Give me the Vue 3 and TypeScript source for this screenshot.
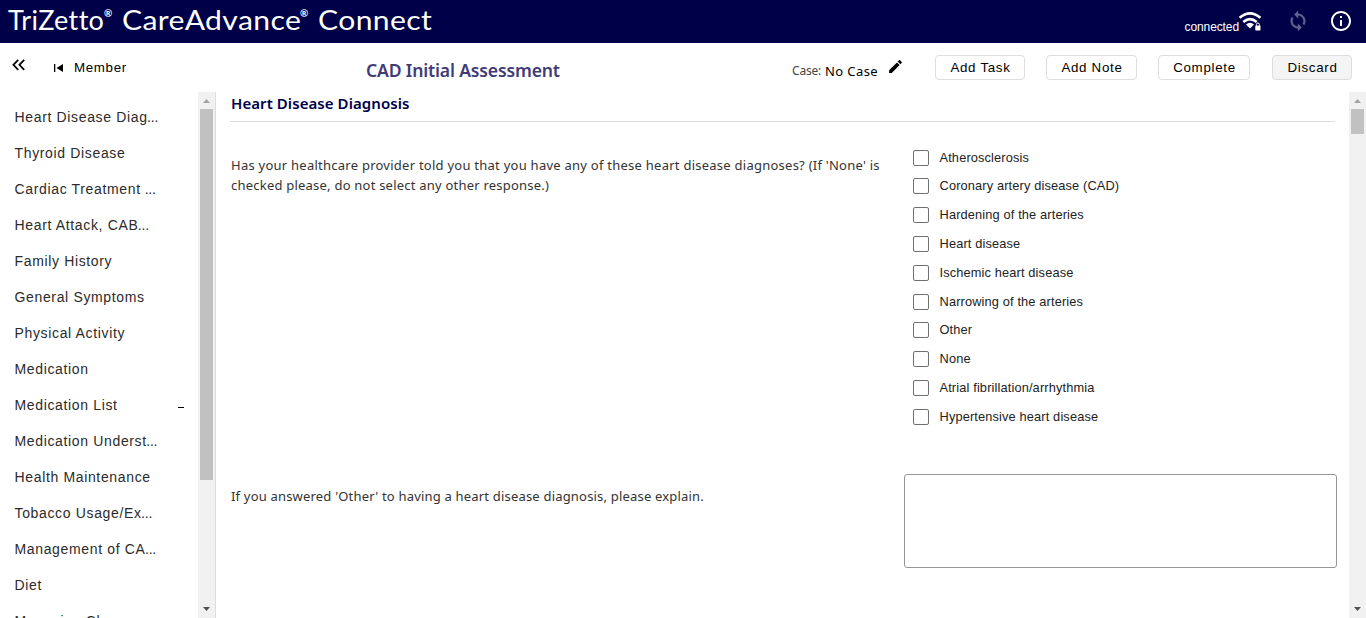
<script setup lang="ts">
import { ref } from 'vue'

interface Section {
  label: string
  cut?: boolean
  marker?: boolean
}

const sections: Section[] = [
  { label: 'Heart Disease Diag', cut: true },
  { label: 'Thyroid Disease' },
  { label: 'Cardiac Treatment ', cut: true },
  { label: 'Heart Attack, CAB', cut: true },
  { label: 'Family History' },
  { label: 'General Symptoms' },
  { label: 'Physical Activity' },
  { label: 'Medication' },
  { label: 'Medication List', marker: true },
  { label: 'Medication Underst', cut: true },
  { label: 'Health Maintenance' },
  { label: 'Tobacco Usage/Ex', cut: true },
  { label: 'Management of CA', cut: true },
  { label: 'Diet' },
  { label: 'Managing Change' },
]

const diagnoses: string[] = [
  'Atherosclerosis',
  'Coronary artery disease (CAD)',
  'Hardening of the arteries',
  'Heart disease',
  'Ischemic heart disease',
  'Narrowing of the arteries',
  'Other',
  'None',
  'Atrial fibrillation/arrhythmia',
  'Hypertensive heart disease',
]

const selected = ref<string[]>([])
const explanation = ref('')
</script>

<template>
  <div class="app">
    <header class="topbar">
      <div class="brand">
        <span class="w1">TriZetto</span><sup>®</sup>
        <span class="w2"><b>CareAdvance</b></span><sup>®</sup>
        <span class="w3"><b>Connect</b></span>
      </div>
      <div class="status">
        <span class="connected">connected</span>
        <svg class="wifi" width="24" height="22" viewBox="0 0 24 22">
          <g fill="none" stroke="#fff" stroke-width="2.5">
            <path d="M1.6 6.8Q12 -2 22.4 6.8" />
            <path d="M5.3 11Q12 5.2 18.7 11" />
          </g>
          <path d="M8 13.4Q12 10.2 16 13.4L12 17.6Z" fill="#fff" />
          <path d="M16.2 12.2h7.6v8.6h-7.6z" fill="#000048" />
          <rect x="17.3" y="14.4" width="5.2" height="5" rx=".6" fill="#fff" />
          <path d="M18.4 14.8v-1.3a1.5 1.5 0 0 1 3 0v1.3" fill="none" stroke="#fff" stroke-width="1" />
        </svg>
        <svg class="sync" width="22" height="22" viewBox="0 0 24 24">
          <path fill="#63638f" stroke="#63638f" stroke-width=".4" d="M12 4V1L8 5l4 4V6c3.31 0 6 2.69 6 6 0 1.01-.25 1.97-.7 2.8l1.46 1.46C19.54 15.03 20 13.57 20 12c0-4.42-3.58-8-8-8zm0 14c-3.31 0-6-2.69-6-6 0-1.01.25-1.97.7-2.8L5.24 7.74C4.46 8.97 4 10.43 4 12c0 4.42 3.58 8 8 8v3l4-4-4-4v3z" />
        </svg>
        <svg class="info" width="24" height="24" viewBox="0 0 24 24">
          <path fill="#fff" d="M11 7h2v2h-2zm0 4h2v6h-2zm1-9C6.48 2 2 6.48 2 12s4.48 10 10 10 10-4.48 10-10S17.52 2 12 2zm0 18c-4.41 0-8-3.59-8-8s3.59-8 8-8 8 3.59 8 8-3.59 8-8 8z" />
        </svg>
      </div>
    </header>

    <div class="toolbar">
      <svg class="collapse" width="14" height="12" viewBox="0 0 14 12">
        <path d="M6.2 .8L1.4 5.8l4.8 5M12.2 .8L7.4 5.8l4.8 5" fill="none" stroke="#000" stroke-width="1.7" />
      </svg>
      <button class="member">
        <svg width="9" height="8" viewBox="0 0 9 8">
          <path d="M0 0h1.3v8H0zM9 0v8L2.5 4z" fill="#000" />
        </svg>
        <span>Member</span>
      </button>
      <h1>CAD Initial Assessment</h1>
      <div class="case">
        <span class="case-label">Case:</span>
        <span class="case-value">No Case</span>
        <svg width="17" height="17" viewBox="0 0 24 24">
          <path d="M3 17.25V21h3.75L17.81 9.94l-3.75-3.75L3 17.25zM20.71 7.04c.39-.39.39-1.02 0-1.41l-2.34-2.34a.9959.9959 0 0 0-1.41 0l-1.83 1.83 3.75 3.75 1.83-1.83z" fill="#000" />
        </svg>
      </div>
      <div class="actions">
        <button class="btn task">Add Task</button>
        <button class="btn note">Add Note</button>
        <button class="btn complete">Complete</button>
        <button class="btn discard">Discard</button>
      </div>
    </div>

    <div class="body">
      <nav class="sections">
        <ul>
          <li v-for="s in sections" :key="s.label">
            <span class="label">{{ s.label }}<span v-if="s.cut" class="dots">...</span></span>
            <i v-if="s.marker" class="marker"></i>
          </li>
        </ul>
        <div class="scrollbar">
          <svg width="17" height="17" viewBox="0 0 17 17"><path d="M5 11h7L8.5 7z" fill="#a3a3a3" /></svg>
          <div class="thumb long"></div>
          <svg class="down" width="17" height="17" viewBox="0 0 17 17"><path d="M5 6h7L8.5 10z" fill="#505050" /></svg>
        </div>
      </nav>

      <main>
        <h2>Heart Disease Diagnosis</h2>
        <section class="question first">
          <p><span class="l1">Has your healthcare provider told you that you have any of these heart disease diagnoses? (If 'None' is</span> <span class="l2">checked please, do not select any other response.)</span></p>
          <div class="options">
            <label v-for="d in diagnoses" :key="d">
              <input v-model="selected" type="checkbox" :value="d" />
              <span>{{ d }}</span>
            </label>
          </div>
        </section>
        <section class="question second">
          <p><span class="l3">If you answered 'Other' to having a heart disease diagnosis, please explain.</span></p>
          <textarea v-model="explanation"></textarea>
        </section>
      </main>

      <div class="scrollbar">
        <svg width="17" height="17" viewBox="0 0 17 17"><path d="M5 11h7L8.5 7z" fill="#a3a3a3" /></svg>
        <div class="thumb short"></div>
        <svg class="down" width="17" height="17" viewBox="0 0 17 17"><path d="M5 6h7L8.5 10z" fill="#505050" /></svg>
      </div>
    </div>
  </div>
</template>

<style>
html,
body {
  overflow: hidden;
  background: #fff;
}
</style>

<style scoped>
* {
  box-sizing: border-box;
}
.app {
  display: flex;
  flex-direction: column;
  width: 1366px;
  height: 618px;
  overflow: hidden;
  font-family: 'Liberation Sans', Arial, sans-serif;
  color: #000;
}
.topbar {
  display: flex;
  justify-content: space-between;
  flex: 0 0 43px;
  background: #000048;
  color: #fff;
}
.brand {
  display: flex;
  align-items: flex-start;
  padding: 4px 0 0 8px;
  font: 400 27px/32px Lato, sans-serif;
  letter-spacing: 0.35px;
  white-space: nowrap;
}
.brand b {
  display: inline-block;
  font-weight: 400;
  transform: scaleX(1.115);
  transform-origin: 0 0;
}
.brand sup {
  width: 9px;
  margin-right: 9px;
  font-size: 10px;
  font-weight: 700;
  line-height: 19px;
  letter-spacing: 0;
}
.w1 { width: 96px; }
.w2 { width: 178px; }
.w3 { width: 114px; }
.status {
  display: flex;
  align-items: flex-start;
  padding-right: 13px;
}
.connected {
  padding-top: 19px;
  font-size: 12px;
  line-height: 16px;
  letter-spacing: -0.1px;
}
.wifi { margin: 11px 0 0 -1px; }
.sync { margin: 10px 0 0 25px; }
.info { margin: 9px 0 0 20px; }

.toolbar {
  display: flex;
  align-items: flex-start;
  flex: 0 0 49px;
}
.collapse { margin: 16px 0 0 12px; }
.member {
  display: flex;
  align-items: center;
  gap: 11px;
  width: 100px;
  margin: 16px 0 0 28px;
  padding: 0;
  border: 0;
  background: none;
  font: 13.33px/17px 'Liberation Sans', Arial, sans-serif;
  letter-spacing: 0.65px;
}
h1 {
  width: 426px;
  margin: 15px 0 0 212px;
  font: 600 17.6px/25px 'Noto Sans', sans-serif;
  letter-spacing: -0.17px;
  color: #3f3c77;
  white-space: nowrap;
}
.case {
  display: flex;
  align-items: flex-start;
  width: 143px;
  padding-top: 18px;
  font: 13px/20px 'Noto Sans', sans-serif;
  white-space: nowrap;
}
.case-label { width: 33px; font-size: 12px; color: #444; letter-spacing: -0.2px; }
.case-value { width: 62px; letter-spacing: 0.4px; }
.case svg { margin-top: -3px; }
.actions { display: flex; margin-top: 12px; }
.btn {
  height: 25px;
  padding: 0 0 0 1px;
  border: 1px solid #ddd;
  border-radius: 4px;
  background: #fff;
  font: 13.33px/22px 'Liberation Sans', Arial, sans-serif;
  letter-spacing: 0.7px;
  color: #000;
}
.task { width: 90px; }
.note { width: 91px; margin-left: 21px; }
.complete { width: 92px; margin-left: 21px; }
.discard { width: 80px; margin-left: 22px; background: #f4f4f4; }

.body {
  display: flex;
  flex: 1;
  min-height: 0;
}
.sections {
  display: flex;
  justify-content: space-between;
  width: 216px;
  border-right: 1px solid #ddd;
  overflow: hidden;
}
ul {
  width: 198px;
  margin: 0;
  padding: 7px 0 0 14.5px;
  list-style: none;
}
li {
  display: flex;
  justify-content: space-between;
  align-items: center;
  height: 36px;
  padding-right: 14px;
  font-size: 14px;
  letter-spacing: 0.65px;
  color: #2b2b2b;
  white-space: nowrap;
}
.label { white-space: pre; }
.dots {
  margin-left: -0.6px;
  letter-spacing: -0.2px;
}
.marker {
  width: 6px;
  height: 1px;
  margin-top: 5px;
  background: #000;
}
.scrollbar {
  display: flex;
  flex-direction: column;
  flex: 0 0 17px;
  height: 526px;
  background: #f1f1f1;
}
.thumb { width: 13px; margin-left: 2px; background: #c1c1c1; }
.long { height: 371px; }
.short { height: 25px; }
.down { margin-top: auto; }

main {
  flex: 1;
  padding: 0 12px 0 14px;
}
h2 {
  width: 1105px;
  height: 30px;
  margin: 0;
  padding-left: 1px;
  border-bottom: 1px solid #ddd;
  font: 600 15px/23px 'Noto Sans', sans-serif;
  letter-spacing: 0.07px;
  color: #000048;
}
.question {
  display: flex;
  align-items: flex-start;
}
.question p {
  width: 674px;
  margin: 0;
  padding-left: 1px;
  font: 13px/20px 'Noto Sans', sans-serif;
  color: #333;
}
.question p span {
  display: block;
  white-space: nowrap;
}
.l1 { letter-spacing: 0.25px; }
.l2 { letter-spacing: 0.22px; }
.l3 { letter-spacing: 0.19px; }
.first { height: 352px; }
.first p { padding-top: 33px; }
.options { padding: 20.8px 0 0 9px; }
.options label {
  display: flex;
  align-items: center;
  height: 28.8px;
  font-size: 12.8px;
  letter-spacing: 0.14px;
  color: #222;
}
.options input {
  appearance: none;
  width: 16px;
  height: 16px;
  margin: 1px 10.5px 0 0;
  border: 1px solid #707070;
  border-radius: 2px;
}
.second p { padding-top: 12px; }
textarea {
  width: 433px;
  height: 94px;
  margin: 0;
  border: 1px solid #959595;
  border-radius: 3px;
  background: #fff;
  resize: none;
}
</style>
